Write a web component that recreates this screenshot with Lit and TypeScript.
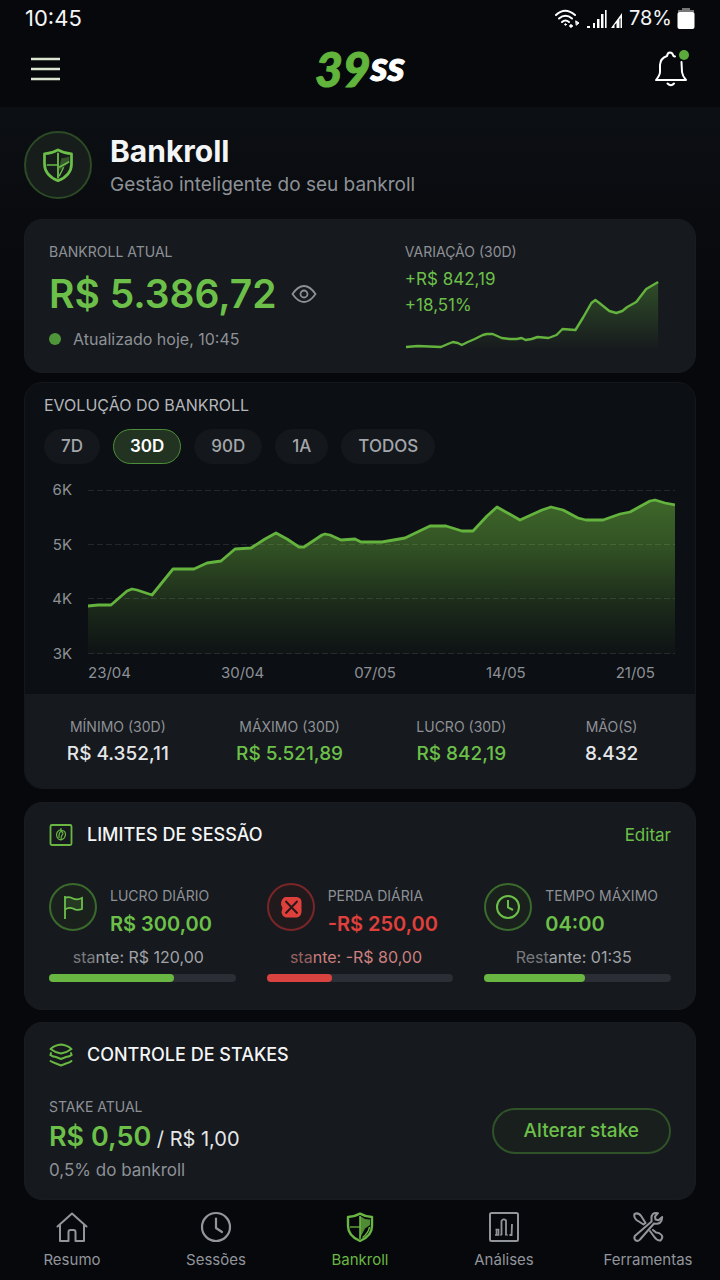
import { LitElement, html, css, svg } from "lit";
import { customElement, property, state } from "lit/decorators.js";
import { classMap } from "lit/directives/class-map.js";
import { styleMap } from "lit/directives/style-map.js";

const shieldOutline = svg`
  <path d="M16 2.6 Q10 6 4 6 V15 C4 22 9 27 16 30 C23 27 28 22 28 15 V6 Q22 6 16 2.6 Z"
    fill="none" stroke="currentColor" stroke-width="2.4" stroke-linejoin="round"/>
  <path d="M16 5 V28" stroke="currentColor" stroke-width="1.6"/>
  <path d="M6 16 H16" stroke="currentColor" stroke-width="1.3"/>`;

const icons: Record<string, unknown> = {
  home: svg`<g fill="none" stroke="currentColor" stroke-width="2" stroke-linejoin="round" stroke-linecap="round">
    <path d="M1.5 15.5 L16 2.5 L30.5 15.5"/>
    <path d="M4 14 V30 H12.5 V21 Q12.5 19 14.5 19 H17.5 Q19.5 19 19.5 21 V30 H28 V14"/></g>`,
  clock: svg`<g fill="none" stroke="currentColor" stroke-width="2.2" stroke-linejoin="round" stroke-linecap="round">
    <circle cx="16" cy="16" r="14"/><path d="M16 7.5 V17 L22 21"/></g>`,
  shield: svg`${shieldOutline}
    <path d="M16 5 Q21 9 26 8.5 V14 L21 17.5 L16 27 Z" fill="currentColor" opacity="0.75"/>
    <path d="M18.5 26.5 Q24.5 22 25.5 16" stroke="currentColor" stroke-width="1.5" fill="none"/>`,
  guard: svg`${shieldOutline}
    <path d="M19 10 Q23 10 26 8.5 V14 L17 21 V18 Z" fill="currentColor" opacity="0.35"/>
    <path d="M17 18 L26 13" stroke="currentColor" stroke-width="1.4" fill="none"/>
    <path d="M17 26 L21 18" stroke="currentColor" stroke-width="1.2" fill="none"/>`,
  chart: svg`<g fill="none" stroke="currentColor">
    <rect x="2" y="2" width="28" height="28" rx="1.5" stroke-width="2"/>
    <path d="M7.500 18.500 H10.500 V24 H7 M8.500 19 V24" stroke-width="1.6"/>
    <path d="M13.500 24 V10 Q15.5 7 18 9.5 V24" stroke-width="1.8"/>
    <path d="M12 24 H14 M17 24 H20" stroke-width="1"/>
    <path d="M21.5 24 H23.6 L24 13" stroke-width="1.8"/></g>`,
  tools: svg`<g fill="none" stroke="currentColor" stroke-width="2" stroke-linejoin="round" stroke-linecap="round">
    <path d="M2.5 3 Q6.500 1 9.500 5.500 L13.500 12 L11.500 13.500 L4.500 9 Q1.500 6.500 2.500 3 Z"/>
    <path d="M18 20 L22 25.500 Q25 30 28.500 29.500 Q31.500 26.500 29.500 24 Q27.500 21.500 24 21.500 L21 19"/>
    <path d="M26 2.200 Q19 1 19.500 8 L19.600 10.500 L2.800 25 Q1.500 28 4 29.600 Q6.500 30.500 8 28.500 L22 12.500 Q30 14 30.200 6 L26.500 9.300 L23.500 8.500 L23 5.500 Z"/></g>`,
};

@customElement("app-icon")
class AppIcon extends LitElement {
  @property() name = "home";
  static styles = css`
    :host { display: block; width: 32px; height: 32px; }
    svg { display: block; width: 100%; height: 100%; }
  `;
  render() {
    return html`<svg viewBox="0 0 32 32" aria-hidden="true">${icons[this.name]}</svg>`;
  }
}

const SPARK: number[][] = [
  [1, 68], [13, 67], [36, 68], [43, 65], [48, 63], [53, 64], [57, 66], [63, 63], [70, 60], [78, 56], [82, 55], [88, 55],
  [97, 59], [105, 60], [112, 60], [117, 59], [121, 61], [127, 60], [133, 58], [144, 59], [152, 56], [158, 50], [171, 51],
  [179, 38], [187, 24], [191, 21], [195, 24], [205, 32], [212, 34], [218, 32], [223, 28], [232, 23], [242, 10], [254, 3],
];

const SERIES: number[][] = [
  [0, 116], [10, 115], [23, 115], [39, 101], [44, 99], [49, 100], [64, 105], [85, 79], [106, 79], [119, 73], [133, 71],
  [147, 59], [163, 58], [177, 49], [188, 43], [199, 49], [211, 57], [216, 57], [234, 45], [237, 44], [242, 45], [253, 50],
  [267, 49], [273, 52], [294, 52], [317, 48], [342, 36], [358, 36], [374, 41], [385, 41], [399, 26], [409, 17], [432, 30],
  [454, 20], [463, 17], [475, 20], [490, 28], [498, 30], [515, 30], [532, 24], [542, 22], [562, 11], [567, 10], [577, 13], [587, 15],
];

const line = (points: number[][]) => "M" + points.map((p) => p.join(" ")).join(" L");
const area = (points: number[][], floor: number) =>
  `${line(points)} V${floor} H${points[0][0]} Z`;

const RANGES = ["7D", "30D", "90D", "1A", "TODOS"];

const STATS = [
  { label: "MÍNIMO (30D)", value: "R$ 4.352,11", up: false },
  { label: "MÁXIMO (30D)", value: "R$ 5.521,89", up: true },
  { label: "LUCRO (30D)", value: "R$ 842,19", up: true },
  { label: "MÃO(S)", value: "8.432", up: false },
];

const LIMITS = [
  { icon: "flag", label: "LUCRO DIÁRIO", value: "R$ 300,00", faded: "sta", rest: "nte: R$ 120,00", share: 67, loss: false },
  { icon: "stop", label: "PERDA DIÁRIA", value: "-R$ 250,00", faded: "sta", rest: "nte: -R$ 80,00", share: 35, loss: true },
  { icon: "time", label: "TEMPO MÁXIMO", value: "04:00", faded: "Rest", rest: "ante: 01:35", share: 54, loss: false },
];

const limitIcons: Record<string, unknown> = {
  flag: svg`<g fill="none" stroke="currentColor" stroke-width="1.8">
    <path d="M4 1 V24"/><path d="M4 3 Q8 1 12 3.500 Q16 5.500 21 3 V14 Q16 16 12 13.500 Q8 12 4 14.500" fill="currentColor" fill-opacity="0.15"/></g>`,
  stop: svg`<path d="M6 2 H18 Q22.500 3 22.500 7 V17 Q22 21.500 18 22.500 H7 Q3 21.500 2.500 17 L3.500 13 L2 9.500 Q2 4 6 2 Z" fill="currentColor"/>
    <path d="M6.500 6 L18.500 18.500 M18.500 6 L6.500 18.500" stroke="#2a1719" stroke-width="2"/>`,
  time: svg`<g fill="none" stroke="currentColor" stroke-width="2"><circle cx="12" cy="12" r="11"/>
    <path d="M12 5 V12.500 L17 15"/></g>`,
};

const TABS = [
  { icon: "home", label: "Resumo" },
  { icon: "clock", label: "Sessões" },
  { icon: "shield", label: "Bankroll" },
  { icon: "chart", label: "Análises" },
  { icon: "tools", label: "Ferramentas" },
];

@customElement("app-root")
class AppRoot extends LitElement {
  @state() range = "30D";

  static styles = css`
    :host {
      display: block;
      min-height: 100vh;
      background: #06080c;
      color: #f4f5f6;
      font-family: Inter, "Liberation Sans", sans-serif;
      --green: #6cc04a;
      --leaf: #69b742;
      --red: #e0403c;
      --muted: #8d9197;
      --card: #16191d;
    }
    * { box-sizing: border-box; }
    button { font: inherit; color: inherit; background: none; border: 0; padding: 0; cursor: pointer; }
    a { color: inherit; text-decoration: none; }
    h1, h2, p { margin: 0; }
    svg { display: block; }

    .status { display: flex; align-items: center; justify-content: space-between; padding: 6px 25px 0; font-size: 22px; line-height: 25px; }
    .signals { display: flex; align-items: center; gap: 5px; font-size: 20px; }
    .topbar { display: flex; align-items: center; justify-content: space-between; height: 76px; padding: 0 30px; }
    .side { width: 36px; }
    .page { padding: 24px; padding-bottom: 0; background: linear-gradient(#0c0f13, #090b0f 110px, #06080c 220px); }

    .hero { display: flex; align-items: flex-start; gap: 18px; padding-bottom: 20px; }
    .badge {
      display: grid; place-items: center; width: 68px; height: 68px; border-radius: 50%;
      border: 2px solid #2c4a25; background: #171d1b; color: var(--green);
    }
    .badge app-icon { width: 36px; height: 36px; }
    .hero h1 { padding-top: 2px; font-size: 30px; line-height: 36px; font-weight: 700; }
    .hero p { margin-top: 2px; font-size: 19px; line-height: 28px; color: var(--muted); }

    .card { background: var(--card); border-radius: 18px; border: 1px solid #181b1f; }
    .label { font-size: 14px; line-height: 20px; color: var(--muted); }

    .balance { display: grid; grid-template-columns: 7fr 5fr; padding: 22px 36px 21px 24px; }
    .amount { display: flex; align-items: center; gap: 14px; margin: 8px 0 9px; font-size: 39px; line-height: 48px; font-weight: 600; color: var(--green); }
    .amount button { color: var(--muted); }
    .updated { display: flex; align-items: center; gap: 12px; font-size: 16px; line-height: 24px; color: var(--muted); }
    .dot { width: 12px; height: 12px; border-radius: 50%; background: #4f963a; }
    .variation { display: grid; }
    .variation > * { grid-area: 1 / 1; }
    .delta { margin-top: 4px; font-size: 17px; line-height: 26px; color: var(--green); }
    .delta + .delta { margin-top: 0; }
    .spark { align-self: end; width: 100%; height: 72px; }

    .evolution { margin-top: 9px; background: #0c0f13; border-color: #14171b; overflow: hidden; }
    .evolution header { padding: 12px 20px 0 19px; }
    .evolution h2 { font-size: 16px; line-height: 20px; font-weight: 400; color: #b4b7bb; }
    .ranges { display: flex; gap: 13px; margin-top: 14px; }
    .ranges button { padding: 0 16px; border-radius: 18px; border: 1px solid #14171b; background: #14171b; font-size: 17px; line-height: 33px; font-weight: 500; color: #a3a6aa; }
    .ranges .on { color: #fff; font-weight: 600; background: #223321; border-color: #4c8f38; }
    .plot { display: grid; grid-template-columns: 28px 1fr; column-gap: 16px; padding: 16px 20px 12px 19px; }
    .yaxis { display: flex; flex-direction: column; justify-content: space-between; font-size: 15px; line-height: 20px; color: var(--muted); text-align: right; }
    .plot svg { width: 100%; height: 164px; margin: 10px 0; }
    .xaxis { grid-column: 2; display: flex; justify-content: space-between; padding-right: 20px; font-size: 15px; line-height: 18px; color: var(--muted); }
    .stats { display: grid; grid-template-columns: 4fr 4fr 4fr 3fr; padding: 23px 19px 20px 7px; background: var(--card); text-align: center; }
    .value { margin-top: 3px; font-size: 19px; line-height: 28px; font-weight: 500; color: #e4e6e8; }
    .up { color: var(--green); }

    .section { padding: 20px 24px 27px; }
    .limits { margin-top: 13px; }
    .stakes { margin-top: 12px; padding-bottom: 18px; }
    .heading { display: flex; align-items: center; gap: 14px; line-height: 24px; font-size: 18px; }
    .heading h2 { flex: 1; font-size: inherit; font-weight: 500; }
    .heading a { font-size: 17px; color: var(--green); }
    .heading svg { color: var(--leaf); }
    .limit-grid { display: grid; grid-template-columns: repeat(3, 1fr); gap: 31px; margin-top: 36px; }
    .limit { color: var(--green); }
    .loss { color: var(--red); }
    .limit-top { display: flex; align-items: flex-start; gap: 13px; }
    .ring { display: grid; place-items: center; flex: none; width: 48px; height: 48px; border-radius: 50%; border: 2px solid #3a6a2c; background: #1a211d; }
    .loss .ring { border-color: #7a2628; background: #211a1d; }
    .limit-value { margin-top: 2px; font-size: 20px; line-height: 32px; font-weight: 600; white-space: nowrap; }
    .limit .label { padding-top: 3px; white-space: nowrap; }
    .rest { margin-top: 5px; padding-right: 8px; text-align: center; font-size: 16px; line-height: 24px; color: #a0a3a8; }
    .loss .rest { color: #cc8080; }
    .faded { opacity: 0.7; }
    .track { height: 8px; margin-top: 5px; border-radius: 4px; background: #2b2e35; }
    .fill { height: 100%; border-radius: 4px; background: var(--leaf); }
    .loss .fill { background: #d9433f; }

    .stake-row { display: flex; align-items: flex-start; justify-content: space-between; margin-top: 30px; }
    .stake { margin: 4px 0; font-size: 20px; line-height: 32px; color: #e4e6e8; }
    .stake strong { font-size: 27px; font-weight: 600; color: var(--green); }
    .note { font-size: 17px; line-height: 22px; color: var(--muted); }
    .change { margin-top: 11px; padding: 0 30px; border: 2px solid #2f5228; border-radius: 23px; background: #191f1d; font-size: 19px; line-height: 42px; font-weight: 500; color: var(--green); }

    .tabs { display: grid; grid-template-columns: repeat(5, 1fr); padding: 11px 0 9px; }
    .tabs a { display: flex; flex-direction: column; align-items: center; gap: 7px; font-size: 15px; line-height: 20px; color: #92959b; }
    .tabs .current { color: var(--leaf); }
  `;

  renderStatus() {
    return html`
      <div class="status">
        <span>10:45</span>
        <span class="signals">
          <svg width="27" height="20" viewBox="0 0 27 20" fill="none" stroke="#fff" stroke-width="2" stroke-linecap="round">
            <path d="M2 6 Q11 -2.500 21 6"/><path d="M5 9.500 Q11.500 4 18 9.500"/><path d="M8 13 Q11.500 10 15 13"/>
            <circle cx="11.500" cy="15.500" r="0.8" fill="#fff" stroke-width="1"/><circle cx="17" cy="17" r="1.300" fill="#fff" stroke-width="1"/>
            <path d="M22 12 L25 14 L22.500 16 Z" fill="#fff" stroke-width="1"/>
          </svg>
          <svg width="38" height="20" viewBox="0 0 38 20" fill="#fff">
            <path d="M1 17 h3 v2 h-3z M7 14 h2 v5 h-2z M11 10 h2.500 v9 h-2.500z M15 5 h2.500 v14 h-2.500z M19 1 h1.600 v18 h-1.600z"/>
            <path d="M25 19 L36 4 V19 H34.500 V9 L33.500 10 V19 H30.500 V14 L28.500 16 V19 Z"/>
          </svg>
          <span>78%</span>
          <svg width="18" height="22" viewBox="0 0 18 22"><path d="M5 0 H13 V2 H17 V4 H1 V2 H5Z" fill="#777"/><rect x="0.500" y="4" width="17" height="17" rx="2" fill="#fff"/></svg>
        </span>
      </div>`;
  }

  renderTopbar() {
    return html`
      <div class="topbar">
        <button class="side" aria-label="Menu">
          <svg width="30" height="24" viewBox="0 0 30 24"><path d="M1 2 H30 M1 12 H30 M1 22 H30" stroke="#dbe5cf" stroke-width="2.400"/></svg>
        </button>
        <svg width="120" height="76" viewBox="0 0 120 76" role="img" aria-label="39ss" font-family="Lato, sans-serif" font-weight="900" font-style="italic">
          <text x="60" y="56" text-anchor="middle"><tspan font-size="48" fill="#62b53c" stroke="#62b53c">39</tspan><tspan dy="-6" font-size="42" fill="#fff" stroke="#fff">ss</tspan></text>
        </svg>
        <button class="side" aria-label="Notificações">
          <svg width="36" height="40" viewBox="0 0 36 40" fill="none" stroke="#fff" stroke-width="2" stroke-linejoin="round" stroke-linecap="round">
            <path d="M21 7.500 L19.500 7 Q18.500 3.500 16 3.500 Q13.500 3.500 13 7 Q6.500 9 6 16 V23 Q6 26 2 31 H32 Q28.500 27 28 23 L27.500 13"/>
            <path d="M13.500 34.500 Q17 38 20 34.500"/>
            <circle cx="30" cy="6" r="5" fill="#5bab3a" stroke="none"/>
          </svg>
        </button>
      </div>`;
  }

  renderBalance() {
    return html`
      <section class="card balance">
        <div>
          <p class="label">BANKROLL ATUAL</p>
          <div class="amount">
            <span>R$ 5.386,72</span>
            <button aria-label="Ocultar saldo">
              <svg width="26" height="20" viewBox="0 0 26 20" fill="none" stroke="currentColor" stroke-width="1.800">
                <path d="M1.500 10 Q7 2 13 2 Q19 2 24.500 10 Q19 18 13 18 Q7 18 1.500 10 Z"/><circle cx="13" cy="10" r="3.500"/>
              </svg>
            </button>
          </div>
          <p class="updated"><span class="dot"></span>Atualizado hoje, 10:45</p>
        </div>
        <div class="variation">
          <svg class="spark" viewBox="0 0 255 72" preserveAspectRatio="none" aria-hidden="true">
            <defs><linearGradient id="sparkFill" x1="0" y1="0" x2="0" y2="1">
              <stop offset="0" stop-color="#4f8f35" stop-opacity="0.45"/><stop offset="1" stop-color="#4f8f35" stop-opacity="0"/>
            </linearGradient></defs>
            <path d=${area(SPARK, 71)} fill="url(#sparkFill)"/>
            <path d=${line(SPARK)} fill="none" stroke="#64b33e" stroke-width="2.400" stroke-linejoin="round" vector-effect="non-scaling-stroke"/>
          </svg>
          <div>
            <p class="label">VARIAÇÃO (30D)</p>
            <p class="delta">+R$ 842,19</p>
            <p class="delta">+18,51%</p>
          </div>
        </div>
      </section>`;
  }

  renderEvolution() {
    return html`
      <section class="card evolution">
        <header>
          <h2>EVOLUÇÃO DO BANKROLL</h2>
          <div class="ranges">
            ${RANGES.map((r) => html`<button class=${classMap({ on: r === this.range })} @click=${() => (this.range = r)}>${r}</button>`)}
          </div>
        </header>
        <div class="plot">
          <div class="yaxis"><span>6K</span><span>5K</span><span>4K</span><span>3K</span></div>
          <svg viewBox="0 0 587 164" preserveAspectRatio="none" role="img" aria-label="Evolução do bankroll">
            <defs><linearGradient id="areaFill" gradientUnits="userSpaceOnUse" x1="0" y1="10" x2="0" y2="160">
              <stop offset="0" stop-color="#6cb83e" stop-opacity="0.52"/>
              <stop offset="0.3" stop-color="#6cb83e" stop-opacity="0.4"/>
              <stop offset="0.7" stop-color="#6cb83e" stop-opacity="0.16"/>
              <stop offset="1" stop-color="#6cb83e" stop-opacity="0.03"/>
            </linearGradient></defs>
            <path d=${area(SERIES, 164)} fill="url(#areaFill)"/>
            <path d="M0 0.500 H587 M0 54.500 H587 M0 108.500 H587 M0 163.500 H587" stroke="#fff" stroke-opacity="0.1" stroke-dasharray="6 3"/>
            <path d=${line(SERIES)} fill="none" stroke="#64b33e" stroke-width="2.800" stroke-linejoin="round" vector-effect="non-scaling-stroke"/>
          </svg>
          <div class="xaxis"><span>23/04</span><span>30/04</span><span>07/05</span><span>14/05</span><span>21/05</span></div>
        </div>
        <div class="stats">
          ${STATS.map((s) => html`<div><p class="label">${s.label}</p><p class=${classMap({ value: true, up: s.up })}>${s.value}</p></div>`)}
        </div>
      </section>`;
  }

  renderLimits() {
    return html`
      <section class="card section limits">
        <div class="heading">
          <svg width="24" height="24" viewBox="0 0 24 24" fill="none" stroke="currentColor" stroke-width="1.800">
            <rect x="1.500" y="2" width="21" height="20" rx="1.500"/>
            <path d="M12 6.500 Q7.500 8 7.500 12 Q8 16.500 12 17 Q16.500 15.500 16.500 11 Q16 7.500 13 7.500 Q9.500 9 10 15 M12 5 V8 L14 10 M12 17 Q12 12 14.500 10.500" stroke-width="1.200"/>
          </svg>
          <h2>LIMITES DE SESSÃO</h2>
          <a href="#editar">Editar</a>
        </div>
        <div class="limit-grid">
          ${LIMITS.map((l) => html`
            <div class=${classMap({ limit: true, loss: l.loss })}>
              <div class="limit-top">
                <span class="ring"><svg width="24" height="24" viewBox="0 0 24 24">${limitIcons[l.icon]}</svg></span>
                <div><p class="label">${l.label}</p><p class="limit-value">${l.value}</p></div>
              </div>
              <p class="rest"><span class="faded">${l.faded}</span>${l.rest}</p>
              <div class="track" role="progressbar" aria-label=${l.label} aria-valuenow=${l.share}>
                <div class="fill" style=${styleMap({ width: `${l.share}%` })}></div>
              </div>
            </div>`)}
        </div>
      </section>`;
  }

  renderStakes() {
    return html`
      <section class="card section stakes">
        <div class="heading">
          <svg width="24" height="24" viewBox="0 0 24 24" fill="none" stroke="currentColor" stroke-width="1.900" stroke-linejoin="round" stroke-linecap="round">
            <path d="M1.500 6 Q6 2 12 1.500 Q18 2 22.500 6 Q18 9.500 12 10.500 Q6 9.500 1.500 6 Z"/>
            <path d="M1.500 12 Q3 13.500 7 14 L12 16 L17 14 Q21 13.500 22.500 12"/>
            <path d="M1.500 12 L2 10 M22.500 12 L22 10"/>
            <path d="M1.500 18 Q3 19 7 20.500 L12 22.500 L17 20.500 Q21 19.500 22.500 18"/>
          </svg>
          <h2>CONTROLE DE STAKES</h2>
        </div>
        <div class="stake-row">
          <div>
            <p class="label">STAKE ATUAL</p>
            <p class="stake"><strong>R$ 0,50</strong> / R$ 1,00</p>
            <p class="note">0,5% do bankroll</p>
          </div>
          <button class="change">Alterar stake</button>
        </div>
      </section>`;
  }

  render() {
    return html`
      ${this.renderStatus()}
      ${this.renderTopbar()}
      <main class="page">
        <div class="hero">
          <div class="badge"><app-icon name="guard"></app-icon></div>
          <div><h1>Bankroll</h1><p>Gestão inteligente do seu bankroll</p></div>
        </div>
        ${this.renderBalance()} ${this.renderEvolution()} ${this.renderLimits()} ${this.renderStakes()}
      </main>
      <nav class="tabs">
        ${TABS.map((t) => html`
          <a href="#${t.label.toLowerCase()}" class=${classMap({ current: t.icon === "shield" })}>
            <app-icon name=${t.icon}></app-icon><span>${t.label}</span>
          </a>`)}
      </nav>`;
  }
}
